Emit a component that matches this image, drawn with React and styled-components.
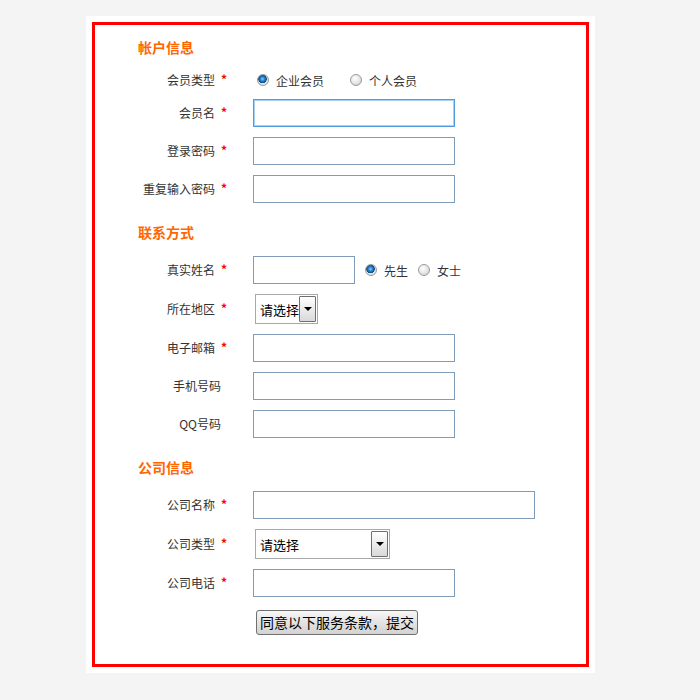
import React from 'react';
import styled, { createGlobalStyle } from 'styled-components';

const GlobalStyle = createGlobalStyle`
  body {
    margin: 0;
    background: #f4f4f4;
    font-family: "Noto Sans CJK SC", "DejaVu Sans", sans-serif;
  }
`;

const Page = styled.div`
  width: 700px;
  height: 700px;
  padding: 16px 0 0 86px;
  box-sizing: border-box;
`;

const Sheet = styled.div`
  width: 509px;
  background: #fff;
  padding: 6px;
  box-sizing: border-box;
`;

const Frame = styled.form`
  border: 3px solid #ff0000;
  padding: 11px 0 29px 43px;
  display: flex;
  flex-direction: column;
`;

const Section = styled.div`
  display: flex;
  flex-direction: column;
  gap: 10px;
  margin-top: ${p => (p.$first ? 0 : 18)}px;
`;

const Title = styled.h3`
  margin: 0 0 3px;
  height: 22px;
  line-height: 22px;
  font-size: 14px;
  font-weight: bold;
  color: #ff6600;
`;

const Row = styled.div`
  display: flex;
  align-items: center;
  height: ${p => p.$h || 28}px;
`;

const Label = styled.label`
  width: 91px;
  flex: none;
  box-sizing: border-box;
  padding-right: ${p => (p.$required ? 2 : 8)}px;
  display: flex;
  justify-content: flex-end;
  align-items: center;
  font-size: 12px;
  line-height: 14px;
  color: #333;
  white-space: nowrap;
`;

const Star = styled.span`
  width: 6px;
  margin-left: 6px;
  color: #ff0000;
  font-size: 12px;
  font-weight: bold;
  line-height: 8px;
  align-self: flex-start;
  margin-top: 2px;
`;

const Control = styled.div`
  margin-left: 24px;
  display: flex;
  align-items: center;
`;

const Input = styled.input`
  width: ${p => p.$w || 202}px;
  height: 28px;
  box-sizing: border-box;
  border: 1px solid ${p => (p.$active ? '#4d9de0' : '#7f9db9')};
  box-shadow: ${p => (p.$active ? 'inset 0 0 0 1px #a6d1f2' : 'none')};
  padding: 0 2px;
  font-size: 13px;
  font-family: inherit;
  caret-color: #000;
  outline: none;
  margin: 0;
`;

const Choice = styled.label`
  display: flex;
  align-items: center;
  font-size: 12px;
  color: #333;
  margin-left: ${p => p.$gap || 0}px;
`;

const Radio = styled.input.attrs({ type: 'radio' })`
  appearance: none;
  width: 12px;
  height: 12px;
  margin: 0 7px 0 0;
  border-radius: 50%;
  border: 1px solid #9a9a9a;
  background: radial-gradient(circle at 40% 35%, #ffffff 0%, #e4e4e4 55%, #c9c9c9 100%);
  box-sizing: border-box;
  &:checked {
    background:
      radial-gradient(circle at 45% 40%, #8fd0ff 0, #2a86d0 2px, #0d4a86 4px, transparent 4.5px),
      radial-gradient(circle, #f4f4f4 0%, #d6d6d6 100%);
  }
`;

const Select = styled.div`
  display: flex;
  align-items: stretch;
  width: ${p => p.$w}px;
  height: 30px;
  margin-left: 2px;
  box-sizing: border-box;
  border: 1px solid #a8a8a8;
  padding: 1px 1px 1px 0;
  background: #fff;
`;

const SelectText = styled.span`
  flex: 1;
  display: flex;
  align-items: center;
  padding-left: 4px;
  font-size: 13px;
  color: #000;
`;

const SelectArrow = styled.span`
  width: 17px;
  box-sizing: border-box;
  border: 1px solid #6f6f6f;
  border-radius: 1px;
  background: linear-gradient(#ffffff, #d9d9d9);
  display: flex;
  align-items: center;
  justify-content: center;
  &::after {
    content: "";
    border-left: 4px solid transparent;
    border-right: 4px solid transparent;
    border-top: 4px solid #000;
  }
`;

const Submit = styled.button`
  margin: 13px 0 0 118px;
  align-self: flex-start;
  height: 25px;
  padding: 0 3px;
  border: 1px solid #707070;
  border-radius: 3px;
  background: linear-gradient(#f7f7f7, #e3e3e3 50%, #d3d3d3);
  font-family: inherit;
  font-size: 14px;
  line-height: 21px;
  color: #000;
`;

function Field({ label, required, children }) {
  return (
    <Row>
      <Label $required={required}>
        {label}
        {required && <Star>*</Star>}
      </Label>
      <Control>{children}</Control>
    </Row>
  );
}

export default function App() {
  return (
    <Page>
      <GlobalStyle />
      <Sheet>
        <Frame onSubmit={e => e.preventDefault()}>
          <Section $first>
            <Title>帐户信息</Title>
            <Row $h={18}>
              <Label $required>会员类型<Star>*</Star></Label>
              <Control>
                <Choice $gap={4}><Radio name="type" defaultChecked />企业会员</Choice>
                <Choice $gap={26}><Radio name="type" />个人会员</Choice>
              </Control>
            </Row>
            <Field label="会员名" required><Input $active autoFocus /></Field>
            <Field label="登录密码" required><Input type="password" /></Field>
            <Field label="重复输入密码" required><Input type="password" /></Field>
          </Section>

          <Section>
            <Title>联系方式</Title>
            <Field label="真实姓名" required>
              <Input $w={102} />
              <Choice $gap={10}><Radio name="sex" defaultChecked />先生</Choice>
              <Choice $gap={10}><Radio name="sex" />女士</Choice>
            </Field>
            <Row $h={30}>
              <Label $required>所在地区<Star>*</Star></Label>
              <Control>
                <Select $w={63}><SelectText>请选择</SelectText><SelectArrow /></Select>
              </Control>
            </Row>
            <Field label="电子邮箱" required><Input /></Field>
            <Field label="手机号码"><Input /></Field>
            <Field label="QQ号码"><Input /></Field>
          </Section>

          <Section>
            <Title>公司信息</Title>
            <Field label="公司名称" required><Input $w={282} /></Field>
            <Row $h={30}>
              <Label $required>公司类型<Star>*</Star></Label>
              <Control>
                <Select $w={135}><SelectText>请选择</SelectText><SelectArrow /></Select>
              </Control>
            </Row>
            <Field label="公司电话" required><Input /></Field>
          </Section>

          <Submit type="submit">同意以下服务条款，提交</Submit>
        </Frame>
      </Sheet>
    </Page>
  );
}
